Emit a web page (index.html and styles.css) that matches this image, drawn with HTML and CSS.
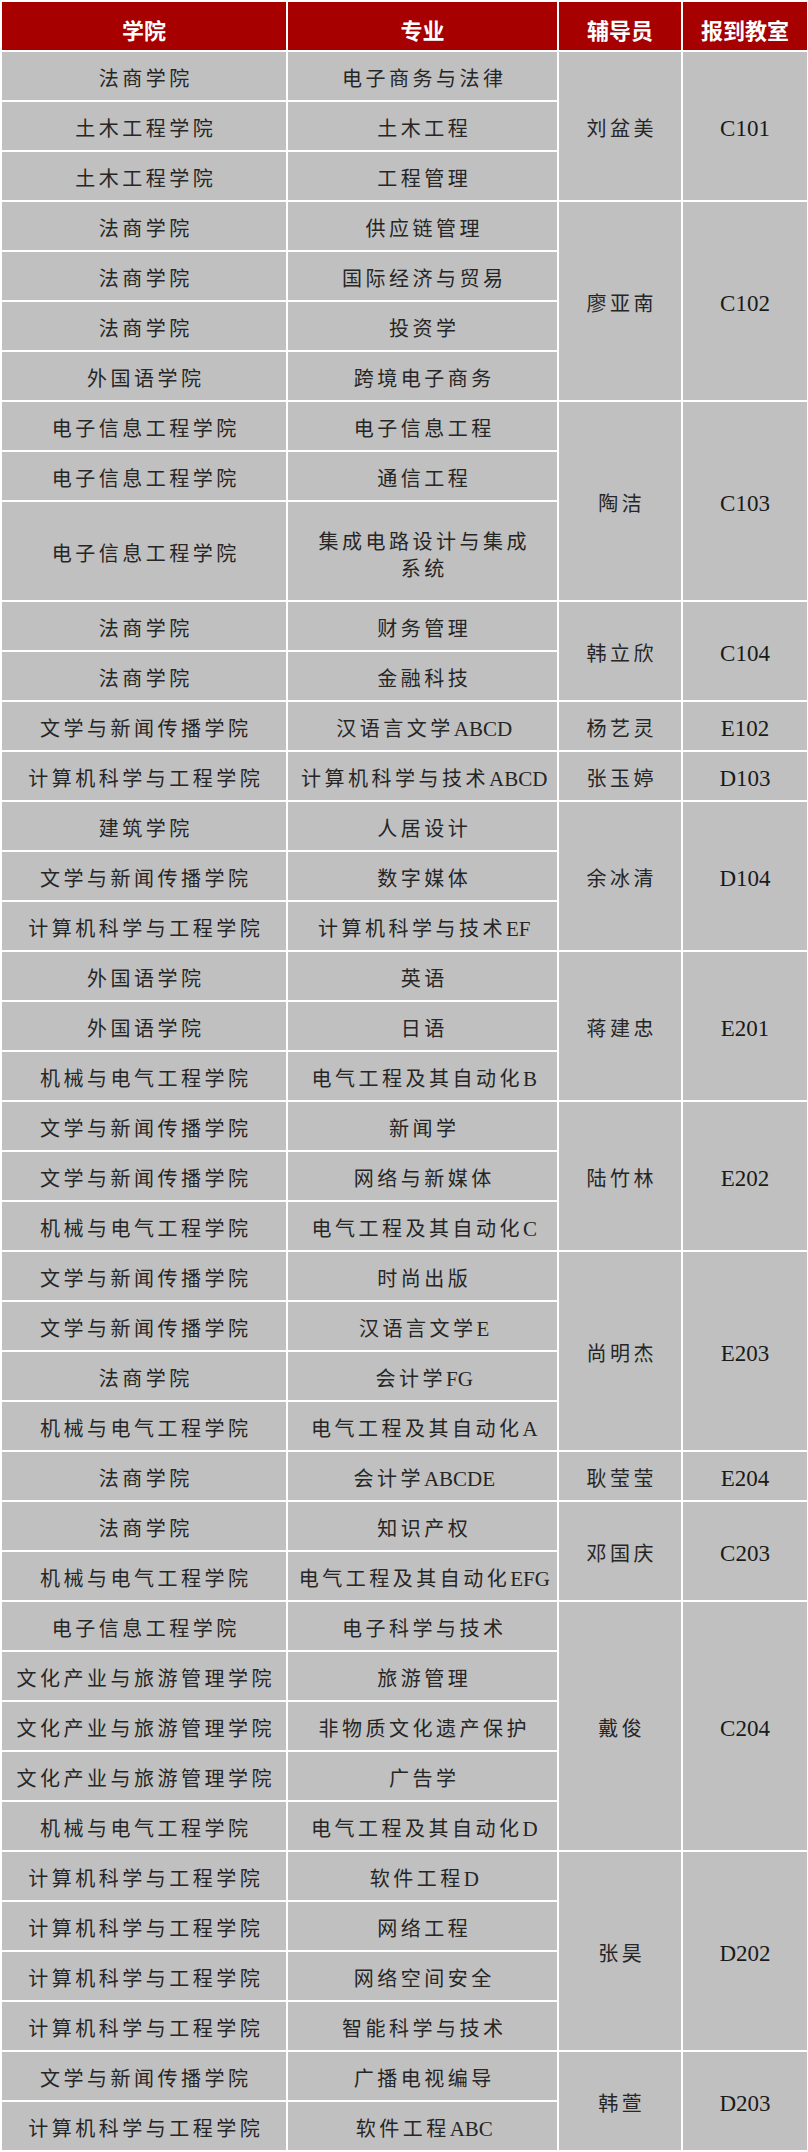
FILE: index.html
```html
<!DOCTYPE html>
<html lang="zh-CN">
<head>
<meta charset="utf-8">
<title>报到教室安排</title>
<link rel="stylesheet" href="styles.css">
</head>
<body>
<table class="roster">
<colgroup>
<col class="c-college"><col class="c-major"><col class="c-tutor"><col class="c-room">
</colgroup>
<thead>
<tr><th>学院</th><th>专业</th><th>辅导员</th><th>报到教室</th></tr>
</thead>
<tbody>
<tr><td>法商学院</td><td>电子商务与法律</td><td rowspan="3">刘盆美</td><td rowspan="3" class="room">C101</td></tr>
<tr><td>土木工程学院</td><td>土木工程</td></tr>
<tr><td>土木工程学院</td><td>工程管理</td></tr>

<tr><td>法商学院</td><td>供应链管理</td><td rowspan="4">廖亚南</td><td rowspan="4" class="room">C102</td></tr>
<tr><td>法商学院</td><td>国际经济与贸易</td></tr>
<tr><td>法商学院</td><td>投资学</td></tr>
<tr><td>外国语学院</td><td>跨境电子商务</td></tr>

<tr><td>电子信息工程学院</td><td>电子信息工程</td><td rowspan="3">陶洁</td><td rowspan="3" class="room">C103</td></tr>
<tr><td>电子信息工程学院</td><td>通信工程</td></tr>
<tr class="tall"><td>电子信息工程学院</td><td class="wrap">集成电路设计与集成<br>系统</td></tr>

<tr><td>法商学院</td><td>财务管理</td><td rowspan="2">韩立欣</td><td rowspan="2" class="room">C104</td></tr>
<tr><td>法商学院</td><td>金融科技</td></tr>

<tr><td>文学与新闻传播学院</td><td>汉语言文学<span class="lat">ABCD</span></td><td>杨艺灵</td><td class="room">E102</td></tr>
<tr><td>计算机科学与工程学院</td><td>计算机科学与技术<span class="lat">ABCD</span></td><td>张玉婷</td><td class="room">D103</td></tr>

<tr><td>建筑学院</td><td>人居设计</td><td rowspan="3">余冰清</td><td rowspan="3" class="room">D104</td></tr>
<tr><td>文学与新闻传播学院</td><td>数字媒体</td></tr>
<tr><td>计算机科学与工程学院</td><td>计算机科学与技术<span class="lat">EF</span></td></tr>

<tr><td>外国语学院</td><td>英语</td><td rowspan="3">蒋建忠</td><td rowspan="3" class="room">E201</td></tr>
<tr><td>外国语学院</td><td>日语</td></tr>
<tr><td>机械与电气工程学院</td><td>电气工程及其自动化<span class="lat">B</span></td></tr>

<tr><td>文学与新闻传播学院</td><td>新闻学</td><td rowspan="3">陆竹林</td><td rowspan="3" class="room">E202</td></tr>
<tr><td>文学与新闻传播学院</td><td>网络与新媒体</td></tr>
<tr><td>机械与电气工程学院</td><td>电气工程及其自动化<span class="lat">C</span></td></tr>

<tr><td>文学与新闻传播学院</td><td>时尚出版</td><td rowspan="4">尚明杰</td><td rowspan="4" class="room">E203</td></tr>
<tr><td>文学与新闻传播学院</td><td>汉语言文学<span class="lat">E</span></td></tr>
<tr><td>法商学院</td><td>会计学<span class="lat">FG</span></td></tr>
<tr><td>机械与电气工程学院</td><td>电气工程及其自动化<span class="lat">A</span></td></tr>

<tr><td>法商学院</td><td>会计学<span class="lat">ABCDE</span></td><td>耿莹莹</td><td class="room">E204</td></tr>

<tr><td>法商学院</td><td>知识产权</td><td rowspan="2">邓国庆</td><td rowspan="2" class="room">C203</td></tr>
<tr><td>机械与电气工程学院</td><td>电气工程及其自动化<span class="lat">EFG</span></td></tr>

<tr><td>电子信息工程学院</td><td>电子科学与技术</td><td rowspan="5">戴俊</td><td rowspan="5" class="room">C204</td></tr>
<tr><td>文化产业与旅游管理学院</td><td>旅游管理</td></tr>
<tr><td>文化产业与旅游管理学院</td><td>非物质文化遗产保护</td></tr>
<tr><td>文化产业与旅游管理学院</td><td>广告学</td></tr>
<tr><td>机械与电气工程学院</td><td>电气工程及其自动化<span class="lat">D</span></td></tr>

<tr><td>计算机科学与工程学院</td><td>软件工程<span class="lat">D</span></td><td rowspan="4">张昊</td><td rowspan="4" class="room">D202</td></tr>
<tr><td>计算机科学与工程学院</td><td>网络工程</td></tr>
<tr><td>计算机科学与工程学院</td><td>网络空间安全</td></tr>
<tr><td>计算机科学与工程学院</td><td>智能科学与技术</td></tr>

<tr><td>文学与新闻传播学院</td><td>广播电视编导</td><td rowspan="2">韩萱</td><td rowspan="2" class="room">D203</td></tr>
<tr><td>计算机科学与工程学院</td><td>软件工程<span class="lat">ABC</span></td></tr>
</tbody>
</table>
</body>
</html>
```

FILE: styles.css
```css
html, body {
  margin: 0;
  padding: 0;
  background: #ffffff;
}

.roster {
  width: 807px;
  border-collapse: collapse;
  table-layout: fixed;
  font-family: "Liberation Serif", "Noto Sans CJK SC", serif;
}

.c-college { width: 286px; }
.c-major { width: 271px; }
.c-tutor { width: 124px; }
.c-room { width: 126px; }

.roster tr {
  height: 50px;
}

.roster tr.tall {
  height: 100px;
}

.roster th,
.roster td {
  border: 2px solid #ffffff;
  padding: 6px 0 0 0;
  text-align: center;
  vertical-align: middle;
}

.roster th {
  background: #a60000;
  color: #ffffff;
  font-family: "Noto Sans CJK SC", sans-serif;
  font-weight: 700;
  font-size: 22px;
  line-height: 26px;
}

.roster td {
  background: #c0c0c0;
  color: #262626;
  font-size: 20px;
  line-height: 26px;
  letter-spacing: 3.5px;
  padding-left: 3.5px;
}

.roster td.wrap {
  line-height: 27px;
  padding-top: 10px;
}

.roster td.room {
  font-size: 23px;
  letter-spacing: 0;
  padding-left: 0;
  color: #1a1a1a;
}

.lat {
  font-size: 21px;
  letter-spacing: 0;
}
```
